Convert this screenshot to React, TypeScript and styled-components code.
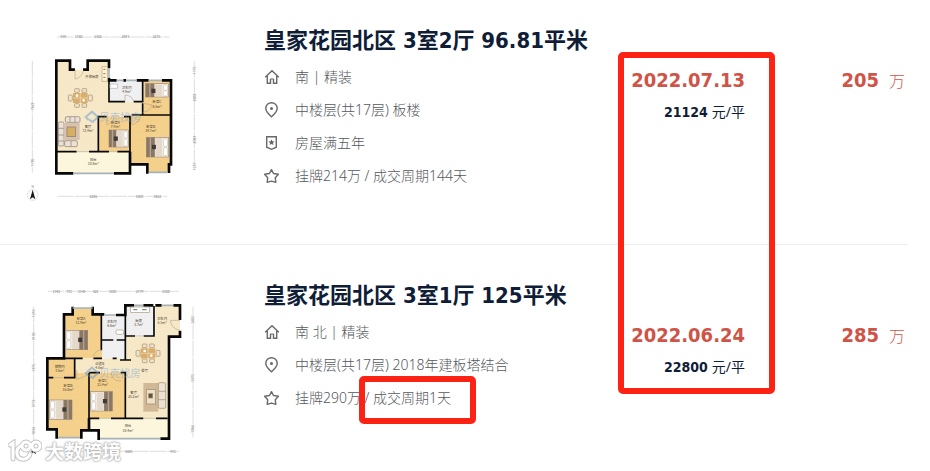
import React from "react";
import styled, { createGlobalStyle } from "styled-components";

const GlobalStyle = createGlobalStyle`
  body {
    margin: 0;
    background: #fff;
    font-family: "Noto Sans", "Noto Sans CJK SC", sans-serif;
  }
`;

const Page = styled.main`
  position: relative;
  padding-right: 22px;
  overflow: hidden;
`;

const List = styled.ul`
  margin: 0;
  padding: 0;
  list-style: none;
`;

const Item = styled.li`
  display: grid;
  grid-template-columns: 190px minmax(0, 1fr) auto 160px;
  align-items: start;
  box-sizing: border-box;
  min-height: 226px;
  padding: 25px 3px 0 20px;

  & + & {
    border-top: 1px solid #eee;
    margin-top: 18px;
    padding-top: 35px;
  }
`;

const PlanLink = styled.a`
  display: block;
  line-height: 0;
`;

const Details = styled.div`
  padding-left: 54px;
`;

const Title = styled.h2`
  margin: 0 0 3px;
  color: #101d37;
  font-family: "DejaVu Sans Condensed", "Noto Sans CJK SC", sans-serif;
  font-size: 22px;
  line-height: 32px;
  font-weight: 700;
  white-space: nowrap;
`;

const Facts = styled.ul`
  margin: 0;
  padding: 0;
  list-style: none;
`;

const Fact = styled.li`
  display: flex;
  align-items: center;
  gap: 15px;
  height: 33px;
  color: #55595d;
  font-size: 14px;
  line-height: 20px;
  white-space: nowrap;
  font-family: "Noto Sans", "Noto Sans CJK SC", sans-serif;
  font-weight: 300;
`;

const Deal = styled.div`
  padding-top: 40px;
  text-align: right;
  font-family: "DejaVu Sans Condensed", "DejaVu Sans", "Noto Sans CJK SC", sans-serif;
`;

const DealDate = styled.div`
  color: #cf5448;
  font-size: 20px;
  line-height: 30px;
  font-weight: 700;
`;

const UnitPrice = styled.div`
  margin-top: 7px;
  color: #101d37;
  font-size: 14px;
  line-height: 20px;

  span {
    font-family: "Noto Sans", "Noto Sans CJK SC", sans-serif;
  }
`;

const Total = styled.div`
  display: flex;
  justify-content: flex-end;
  align-items: baseline;
  gap: 10px;
  padding-top: 40px;
  color: #cf5448;
  line-height: 30px;

  strong {
    font-family: "DejaVu Sans Condensed", "DejaVu Sans", sans-serif;
    font-size: 20px;
  }

  span {
    font-family: "Noto Sans CJK SC", sans-serif;
    font-size: 16px;
    font-weight: 300;
  }
`;

const DateMark = styled.div`
  position: absolute;
  box-sizing: border-box;
  top: 52px;
  right: 155px;
  width: 157px;
  height: 342px;
  border: 6px solid #fd2314;
  border-radius: 5px;
`;

const CycleMark = styled(DateMark)`
  top: 376px;
  right: auto;
  left: 359px;
  width: 117px;
  height: 48px;
`;

const Watermark = styled.div`
  position: absolute;
  left: 8px;
  top: 438px;
  display: flex;
  align-items: center;
  gap: 3px;
  color: #fff;
  font-family: "Noto Sans CJK SC", sans-serif;
  font-size: 19px;
  line-height: 26px;
  font-weight: 700;
  text-shadow: 0 0 1px #aaa, 0 0 2px #aaa, 0 0 3px #bbb;
`;

type IconName = "home" | "pin" | "badge" | "star";

const Icon = ({ name }: { name: IconName }) => (
  <svg width="16" height="16" viewBox="0 0 16 16" fill="none" stroke="#65696d" strokeWidth="1.4" aria-hidden="true">
    {name === "home" && (
      <>
        <path d="M1.2 8.3 8 1.7l6.800 6.600M3.300 7v7.200h3.200V10M12.700 7v7.200H9.500V10" />
        <path d="M6.200 10h3.600" strokeWidth="1" />
      </>
    )}
    {name === "pin" && (
      <>
        <path d="M7.500 14.800C4.800 12.200 1.800 9.600 1.800 6.400a5.700 5.700 0 0 1 11.400 0c0 3.200-3 5.800-5.700 8.400Z" />
        <circle cx="7.5" cy="6.500" r="1.500" fill="#65696d" stroke="none" />
      </>
    )}
    {name === "badge" && (
      <>
        <path d="M2.700 1.800h9.600v10.400L7.500 14.300 2.700 12.200Z" />
        <path d="m7.500 4.300.9 2 2.200.2-1.700 1.400.5 2.200-1.900-1.200-1.900 1.200.5-2.200-1.700-1.400 2.200-.2Z" fill="#65696d" stroke="none" />
      </>
    )}
    {name === "star" && (
      <path d="m7.500 1.700 2 3.800 4.900.8-3.100 3.500.5 4.500-4.300-1.200-4.300 1.200.5-4.500L.6 6.300l4.900-.8Z" strokeLinejoin="round" />
    )}
  </svg>
);

type Label = [number, number, string];

const Labels = ({ items, size = 10, fill = "#4a4033" }: { items: Label[]; size?: number; fill?: string }) => (
  <g fill={fill} fontSize={size} textAnchor="middle" fontFamily="'Noto Sans CJK SC', sans-serif">
    {items.map(([x, y, text]) => (
      <text key={`${x}-${y}`} x={x} y={y}>{text}</text>
    ))}
  </g>
);

const SideLabels = ({ items }: { items: Label[] }) => (
  <g fill="#777" fontSize="10" textAnchor="middle" fontFamily="'Noto Sans', sans-serif">
    {items.map(([x, y, text]) => (
      <text key={`${x}-${y}`} transform={`translate(${x} ${y}) rotate(-90)`}>{text}</text>
    ))}
  </g>
);

const Patterns = ({ id }: { id: string }) => (
  <defs>
    <pattern id={`${id}-wood`} width="14" height="60" patternUnits="userSpaceOnUse">
      <rect width="14" height="60" fill="#f4d18d" />
      <path d="M0 0V60M0 20H7M7 45H14M7 0V60" stroke="#efc77c" strokeWidth="1" />
    </pattern>
    <pattern id={`${id}-tile`} width="14" height="14" patternUnits="userSpaceOnUse">
      <rect width="14" height="14" fill="#f7e9c8" />
      <path d="M0 0H14M0 0V14" stroke="#f1dfb8" />
    </pattern>
    <pattern id={`${id}-bath`} width="8" height="8" patternUnits="userSpaceOnUse">
      <rect width="8" height="8" fill="#f1f1f3" />
      <path d="M0 0H8M0 0V8" stroke="#e3e4e7" />
    </pattern>
  </defs>
);

const Bed = ({ x, y, w, h, flip = false }: { x: number; y: number; w: number; h: number; flip?: boolean }) => (
  <g transform={flip ? `translate(${x + w} ${y}) scale(-1 1)` : `translate(${x} ${y})`}>
    <rect width={w} height={h} fill="#f3ece2" stroke="#9a8a78" strokeWidth="2" />
    <rect width={w * 0.38} height={h} fill="#8a7764" />
    <path d={`M${w * 0.18} 0V${h}`} stroke="#b7a48f" strokeWidth="4" />
    <rect x={w * 0.4} y="2" width={w * 0.3} height={h - 4} fill="#e3d8c9" />
    <rect x={w * 0.25} y={h * 0.38} width="12" height="13" fill="#3e3a39" />
    <rect x={w * 0.77} y="4" width={w * 0.18} height={h * 0.4} rx="4" fill="#fff" stroke="#a0958a" />
    <rect x={w * 0.77} y={h * 0.53} width={w * 0.18} height={h * 0.4} rx="4" fill="#fff" stroke="#a0958a" />
  </g>
);

const Table = ({ x, y }: { x: number; y: number }) => (
  <g transform={`translate(${x} ${y})`} stroke="#a58a66" strokeWidth="2" fill="#efe3cd">
    <rect x="-17" y="-28" width="14" height="11" rx="2" />
    <rect x="5" y="-28" width="14" height="11" rx="2" />
    <rect x="-17" y="17" width="14" height="11" rx="2" />
    <rect x="5" y="17" width="14" height="11" rx="2" />
    <rect x="-36" y="-9" width="12" height="18" rx="3" />
    <rect x="24" y="-9" width="12" height="18" rx="3" />
    <rect x="-22" y="-15" width="44" height="30" fill="#d9ae6c" stroke="none" />
    <path d="M0-15V15M-22 0H22" stroke="#f5e1b8" />
    <circle cx="-10" cy="-7" r="4" fill="#fff" stroke="none" />
    <circle cx="10" cy="7" r="4" fill="#fff" stroke="none" />
  </g>
);

const Brand = ({ x, y }: { x: number; y: number }) => (
  <g opacity="0.5">
    <path d={`M${x + 6} ${y + 12}l-9-9 19-16 18 16-16 15-10-7`} fill="none" stroke="#6398d4" strokeWidth="6" />
    <text x={x + 38} y={y + 14} fill="#82a7d0" fontSize="31" fontFamily="'Noto Sans CJK SC', sans-serif">贝壳找房</text>
  </g>
);

const PlanA = () => (
  <svg width="190" height="180" viewBox="0 0 570 540" role="img" aria-label="皇家花园北区 3室2厅 户型图">
    <Patterns id="a" />
    <g stroke="#bbb" strokeWidth="1.500" strokeDasharray="50 3">
      <path d="M112 36H448M112 514H442M37 108V443M523 108V435" />
    </g>
    <path d="M109 107H150V134H203V107H267V380H109Z" fill="url(#a-tile)" />
    <path d="M236 230H370V275H236Z" fill="url(#a-tile)" />
    <path d="M267 166H370V230H267Z" fill="url(#a-bath)" />
    <path d="M370 166H453V270H370ZM236 275H332V380H236ZM332 270H453V418H447V442H382V418H332Z" fill="url(#a-wood)" />
    <path d="M112 380H330V445H112Z" fill="#fcf7dc" />
    <g fill="none" stroke="#080808" strokeWidth="8">
      <path d="M160 445H109V107H150V134H165M189 134H203V107H267V130M267 158V166H290M310 166H318M350 166H386M426 166H453V418H447V444M382 446V418H330V380M282 445H330V418" />
      <path strokeWidth="5" d="M267 166V230H315M341 230H368V166M335 270H453M368 235V270M235 380V275H260M330 418V275H312M109 380H170M207 380H267M292 380H330" />
    </g>
    <g stroke="#a7b2b6" strokeWidth="5">
      <path d="M290 166H310M318 166H350M386 166H426M160 445H282M386 442H443M267 130V158" />
    </g>
    <g fill="none" stroke="#b5aa90" strokeWidth="2">
      <path d="M165 134V162Q184 160 191 136M315 230V210Q338 212 341 230M368 262Q390 260 396 240L370 235M260 275V299Q281 294 282 275M335 275V299Q359 294 361 275M170 380H207M267 380H292" />
    </g>
    <path d="M246 125H262V169H246Z" fill="#fff3d9" stroke="#bb9d73" strokeWidth="2" />
    <path d="M250 133h6M250 146h6M250 157h6" stroke="#8b744f" strokeWidth="3" />
    <path d="M270 177H293V190H270Z" fill="#fff" stroke="#abb0b6" strokeWidth="2" />
    <Table x={181} y={219} />
    <g fill="#ebe2d5" stroke="#857970" strokeWidth="2">
      <rect x="136" y="275" width="44" height="17" rx="4" />
      <rect x="115" y="291" width="17" height="72" rx="4" />
      <rect x="134" y="347" width="38" height="18" rx="4" />
      <rect x="132" y="294" width="47" height="51" fill="#d6c2ae" stroke="none" />
      <rect x="141" y="306" width="25" height="29" fill="#d5b060" />
      <path d="M150 276V292M165 276V292M115 310H131M115 330H131M115 348H131M153 348V364" />
    </g>
    <Bed x={377} y={176} w={69} h={40} />
    <Bed x={267} y={315} w={58} h={51} />
    <Bed x={379} y={337} w={67} h={59} />
    <Brand x={200} y={273} />
    <Labels items={[[216, 159, "开放厨房"], [320, 191, "卫生间"], [320, 203, "4.9m²"], [411, 235, "卧室C"], [411, 248, "6.5m²"], [204, 309, "客厅"], [204, 322, "31.9m²"], [286, 296, "卧室A"], [286, 308, "7.9m²"], [392, 310, "卧室B"], [392, 322, "14.7m²"], [220, 408, "阳台"], [220, 421, "10.8m²"]]} />
    <Labels fill="#777" items={[[130, 40, "959"], [176, 40, "1760"], [234, 40, "1502"], [316, 40, "2893"], [409, 40, "2275"], [220, 518, "6286"], [358, 518, "1500"], [412, 518, "1652"], [38, 488, "N"]]} />
    <SideLabels items={[[41, 244, "7623"], [41, 412, "1705"], [527, 136, "1775"], [527, 218, "2608"], [527, 344, "4083"], [527, 424, "1257"]]} />
    <circle cx="38" cy="510" r="16" fill="none" stroke="#aaa" />
    <path d="m38 494 8 29-8-6-8 6Z" fill="#171717" />
  </svg>
);

const PlanB = () => (
  <svg width="190" height="191" viewBox="0 0 570 573" role="img" aria-label="皇家花园北区 3室1厅 户型图">
    <Patterns id="b" />
    <path d="M84 34H476M84 514H476M41 80V515M519 80V473" stroke="#bbb" strokeWidth="1.500" strokeDasharray="48 3" />
    <path d="M316 170H406V76H480V170H443V415H316ZM165 235H318V278H165Z" fill="url(#b-tile)" />
    <path d="M246 105H315V235H246ZM316 78H402V168H316Z" fill="url(#b-bath)" />
    <path d="M132 103H158V84H218V103H246V235H132ZM82 235H164V293H205V448H184V473H110V448H82ZM208 278H316V415H208ZM164 278H208V293H164Z" fill="url(#b-wood)" />
    <path d="M208 415H445V476H236V451H208Z" fill="#fcf7dc" />
    <g fill="none" stroke="#080808" strokeWidth="8">
      <path d="M158 80V103H132V235H82V448H110V476M218 80V103H253M288 105H316V76H342M370 76H400M406 76H425M460 76H480V120M480 152V170H447V476H421M240 476H236V451H184V476M207 448V415" />
      <path strokeWidth="5" d="M244 103V211M245 180H280M290 180H316M316 78V240M316 168H345M371 168H402V78M132 235H188M220 235H246M278 235H290M300 240H333M82 293H100M132 293H164V238M207 278V448M208 278H240M302 278H316V415M208 415H238M273 415H370M408 415H443" />
    </g>
    <path d="M158 84H218M253 105H288M342 76H370M425 76H460M114 473H180M240 476H421" stroke="#a7b2b6" strokeWidth="5" />
    <path d="M480 121H451Q453 145 480 151M220 235Q221 212 244 209M170 270V298Q203 290 207 274M273 278Q277 305 303 303M100 293H132M238 415H273M370 415H408M345 168H371" fill="none" stroke="#b5aa90" strokeWidth="2" />
    <g fill="#fff" stroke="#aa987c" strokeWidth="2">
      <rect x="332" y="81" width="56" height="16" />
      <path d="M340 89H352M366 89H380" strokeWidth="4" stroke="#7f8d91" />
      <rect x="288" y="150" width="23" height="13" rx="4" />
    </g>
    <Bed x={137} y={151} w={66} h={58} flip />
    <Bed x={88} y={360} w={68} h={58} flip />
    <Bed x={212} y={335} w={65} h={58} flip />
    <Table x={384} y={220} />
    <g fill="#ece2d4" stroke="#9a8870" strokeWidth="2">
      <rect x="370" y="309" width="45" height="86" fill="#d2b996" stroke="none" />
      <rect x="415" y="308" width="22" height="77" rx="4" />
      <path d="M416 334H437M416 359H437" />
      <rect x="379" y="329" width="28" height="43" fill="#eee0c4" />
      <rect x="386" y="341" width="12" height="13" fill="#65533d" />
    </g>
    <Brand x={200} y={276} />
    <Labels items={[[183, 120, "卧室A"], [183, 132, "11.9m²"], [275, 129, "卫生间"], [275, 141, "6.6m²"], [356, 126, "厨房"], [356, 138, "5.7m²"], [426, 121, "卫生间"], [426, 133, "5.1m²"], [119, 265, "储物间"], [119, 277, "3.6m²"], [239, 256, "过道B"], [239, 268, "4.8m²"], [374, 277, "餐厅"], [144, 322, "卧室B"], [144, 334, "16.8m²"], [248, 306, "卧室C"], [248, 318, "11.4m²"], [341, 342, "客厅"], [341, 355, "25.2m²"], [324, 442, "阳台"], [324, 455, "10.4m²"]]} />
    <Labels fill="#777" items={[[109, 38, "1342"], [147, 38, "731"], [185, 38, "1540"], [227, 38, "828"], [278, 38, "1800"], [359, 38, "2779"], [438, 38, "2500"], [327, 518, "6605"], [459, 518, "931"]]} />
    <SideLabels items={[[45, 100, "1210"], [45, 169, "3130"], [45, 263, "1375"], [45, 370, "3772"], [45, 453, "1034"], [523, 120, "2402"], [523, 293, "5975"], [523, 447, "1366"]]} />
    <path d="m40 494 8 29-8-6-8 6Z" fill="#222" />
  </svg>
);

interface Listing {
  title: string;
  facts: [IconName, string][];
  date: string;
  unit: string;
  total: string;
  Plan: () => React.JSX.Element;
}

const listings: Listing[] = [
  {
    title: "皇家花园北区 3室2厅 96.81平米",
    facts: [["home", "南 | 精装"], ["pin", "中楼层(共17层) 板楼"], ["badge", "房屋满五年"], ["star", "挂牌214万 / 成交周期144天"]],
    date: "2022.07.13",
    unit: "21124",
    total: "205",
    Plan: PlanA,
  },
  {
    title: "皇家花园北区 3室1厅 125平米",
    facts: [["home", "南 北 | 精装"], ["pin", "中楼层(共17层) 2018年建板塔结合"], ["star", "挂牌290万 / 成交周期1天"]],
    date: "2022.06.24",
    unit: "22800",
    total: "285",
    Plan: PlanB,
  },
];

export default function App() {
  return (
    <Page>
      <GlobalStyle />
      <List>
        {listings.map(({ title, facts, date, unit, total, Plan }) => (
          <Item key={title}>
            <PlanLink href="#"><Plan /></PlanLink>
            <Details>
              <Title>{title}</Title>
              <Facts>
                {facts.map(([icon, text]) => (
                  <Fact key={text}><Icon name={icon} />{text}</Fact>
                ))}
              </Facts>
            </Details>
            <Deal>
              <DealDate>{date}</DealDate>
              <UnitPrice><strong>{unit}</strong> <span>元/平</span></UnitPrice>
            </Deal>
            <Total><strong>{total}</strong><span>万</span></Total>
          </Item>
        ))}
      </List>
      <DateMark />
      <CycleMark />
      <Watermark>
        <svg width="34" height="24" viewBox="0 0 34 24" fill="none" strokeLinecap="round" aria-hidden="true">
          <g stroke="#c4c4c4" strokeWidth="5">
            <path d="M2 6 5 4V20M13 7Q8 9 9 15T17 20Q21 19 22 15" />
            <circle cx="18" cy="7" r="4" /><circle cx="28" cy="7" r="4" />
          </g>
          <g stroke="#fff" strokeWidth="3">
            <path d="M2 6 5 4V20M13 7Q8 9 9 15T17 20Q21 19 22 15" />
            <circle cx="18" cy="7" r="4" /><circle cx="28" cy="7" r="4" />
          </g>
        </svg>
        <span>大数跨境</span>
      </Watermark>
    </Page>
  );
}
